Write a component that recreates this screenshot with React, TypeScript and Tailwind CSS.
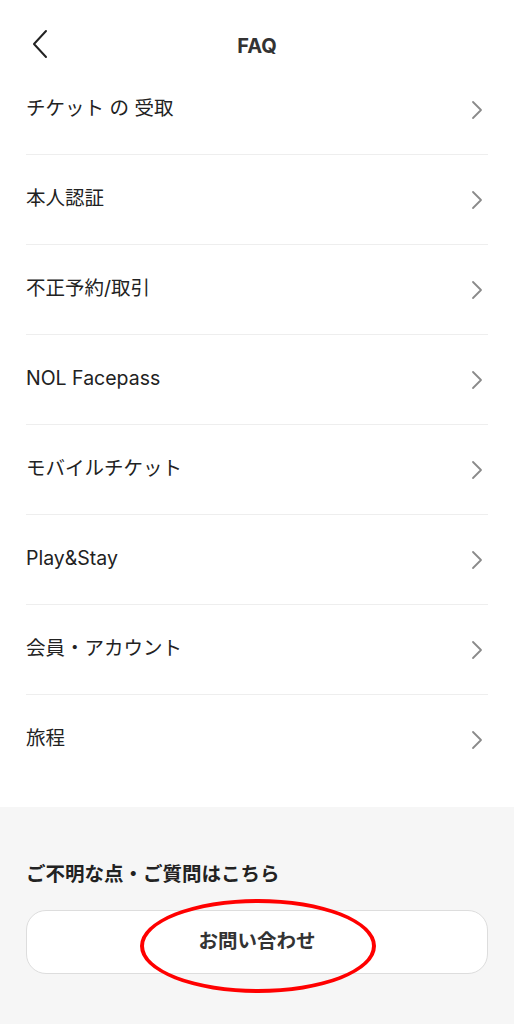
import React from 'react';

const items = [
  'チケット の 受取',
  '本人認証',
  '不正予約/取引',
  'NOL Facepass',
  'モバイルチケット',
  'Play&Stay',
  '会員・アカウント',
  '旅程',
];

const Chevron: React.FC = () => (
  <svg width="14" height="22" viewBox="0 0 14 22" fill="none">
    <path d="M3 3l8 8-8 8" stroke="#8a8a8a" strokeWidth="1.8" strokeLinecap="round" strokeLinejoin="round" />
  </svg>
);

export default function App() {
  return (
    <div
      className="w-[514px] h-[1024px] bg-white flex flex-col text-[#222]"
      style={{ fontFamily: 'Inter, "Noto Sans CJK JP", sans-serif' }}
    >
      <div className="relative h-[65px] flex items-center justify-center shrink-0">
        <button className="absolute left-[28px] top-[28px]">
          <svg width="22" height="32" viewBox="0 0 22 32" fill="none">
            <path d="M18 3L6 16l12 13" stroke="#222" strokeWidth="2" strokeLinecap="round" strokeLinejoin="round" />
          </svg>
        </button>
        <h1 className="text-[20px] font-bold pt-[26px] leading-none text-[#333]">FAQ</h1>
      </div>

      <div className="px-[26px] flex flex-col">
        {items.map((label, i) => (
          <div
            key={label}
            className={`h-[90px] flex items-center justify-between pr-[4px] ${
              i < items.length - 1 ? 'border-b border-[#eeeeee]' : ''
            }`}
          >
            <span className="text-[19.5px] -mt-[2px]">{label}</span>
            <Chevron />
          </div>
        ))}
      </div>

      <div className="h-[22px] shrink-0" />

      <div className="flex-1 bg-[#f6f6f6] px-[26px] pt-[58px]">
        <p className="text-[19.5px] font-bold leading-none text-[#222]">ご不明な点・ご質問はこちら</p>
        <div className="relative mt-[25px]">
          <button className="w-full h-[64px] bg-white border border-[#dddddd] rounded-[20px] text-[19.5px] font-bold text-[#333]">
            お問い合わせ
          </button>
          <div className="absolute left-[114px] top-[-11px] w-[236px] h-[94px] rounded-[50%] border-[4px] border-[#f00] pointer-events-none" />
        </div>
      </div>
    </div>
  );
}
